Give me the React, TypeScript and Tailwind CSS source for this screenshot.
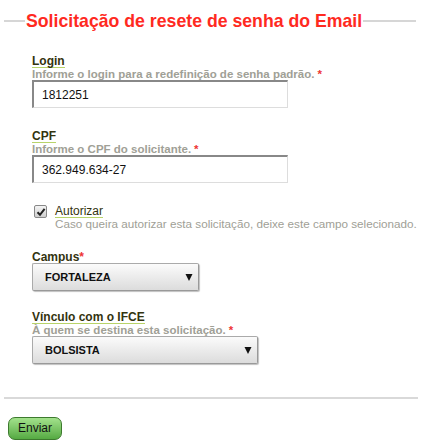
import React from "react";

const Req = () => <span className="text-[#e33] ml-[3px]">*</span>;

function Arrow() {
  return (
    <svg width="8" height="8" viewBox="0 0 8 8" className="shrink-0">
      <polygon points="0.5,1 7.5,1 4,8" fill="#111" />
    </svg>
  );
}

function Label({ children }: { children: React.ReactNode }) {
  return (
    <span className="inline-block self-start text-[12px] leading-[12px] font-bold text-[#33330f] border-b border-[#b8d46a]">
      {children}
    </span>
  );
}

function Hint({ children }: { children: React.ReactNode }) {
  return <div className="text-[11.5px] leading-[12px] font-bold text-[#a0a096]">{children}</div>;
}

function TextInput({ value }: { value: string }) {
  return (
    <div className="w-[256px] h-[28px] flex items-center pl-[8px] text-[12px] text-[#111] border border-[#ddd] border-t-[2px] border-l-[2px] border-t-[#888] border-l-[#888] bg-white">
      {value}
    </div>
  );
}

function Select({ value, width }: { value: string; width: string }) {
  return (
    <div
      className={`${width} h-[28px] flex items-center justify-between pl-[12px] pr-[5px] text-[11px] font-bold text-[#111] rounded-[2px] border border-[#aaa] border-r-[#999] border-b-[#999] bg-gradient-to-b from-[#fbfbfb] to-[#dcdcdc] shadow-[1px_1px_1px_rgba(0,0,0,0.25)]`}
    >
      <span>{value}</span>
      <Arrow />
    </div>
  );
}

export default function App() {
  return (
    <div className="w-[422px] h-[446px] bg-white overflow-hidden" style={{ fontFamily: '"Liberation Sans", Arial, sans-serif' }}>
      <div className="flex items-center pt-[8px] pl-[4px] pr-[6px]">
        <div className="w-[21px] h-[2px] bg-[#d6d6d6]" />
        <h1 className="px-[1px] text-[17.7px] leading-[26px] font-bold text-[#ff2a1f]">
          Solicitação de resete de senha do Email
        </h1>
        <div className="flex-1 h-[2px] bg-[#d6d6d6]" />
      </div>

      <div className="pl-[32px] mt-[21px] flex flex-col">
        <Label>Login</Label>
        <Hint>
          Informe o login para a redefinição de senha padrão.<Req />
        </Hint>
        <TextInput value="1812251" />

        <div className="h-[22px]" />
        <Label>CPF</Label>
        <Hint>
          Informe o CPF do solicitante.<Req />
        </Hint>
        <TextInput value="362.949.634-27" />

        <div className="flex items-start mt-[22px]">
          <div className="ml-[2px] w-[13px] h-[13px] rounded-[2px] border border-[#888] bg-gradient-to-b from-[#f4f4f4] to-[#cfcfcf] flex items-center justify-center">
            <svg width="10" height="10" viewBox="0 0 10 10">
              <path d="M1.5 5.2 L4 7.8 L8.6 1.8" fill="none" stroke="#222" strokeWidth="2" />
            </svg>
          </div>
          <div className="ml-[8px] flex flex-col">
            <span className="inline-block self-start text-[12px] leading-[12px] text-[#33330f] border-b border-[#b8d46a]">
              Autorizar
            </span>
            <span className="text-[11.7px] leading-[12px] whitespace-nowrap text-[#a0a096]">
              Caso queira autorizar esta solicitação, deixe este campo selecionado.
            </span>
          </div>
        </div>

        <div className="mt-[22px] text-[12px] leading-[11px] font-bold text-[#33330f]">
          Campus<span className="text-[#e33]">*</span>
        </div>
        <div>
          <Select value="FORTALEZA" width="w-[167px]" />
        </div>

        <div className="h-[20px]" />
        <Label>Vínculo com o IFCE</Label>
        <Hint>
          À quem se destina esta solicitação.<Req />
        </Hint>
        <div>
          <Select value="BOLSISTA" width="w-[226px]" />
        </div>
      </div>

      <div className="mt-[33px] mx-[4px] h-[2px] bg-[#d9d9d9]" />

      <div className="pl-[8px] pt-[16px]">
        <button className="h-[23px] px-[9px] rounded-[7px] border border-[#3d7a2e] bg-gradient-to-b from-[#a3e28c] to-[#55aa42] text-[12px] leading-[12px] text-[#111]">
          Enviar
        </button>
      </div>
    </div>
  );
}
